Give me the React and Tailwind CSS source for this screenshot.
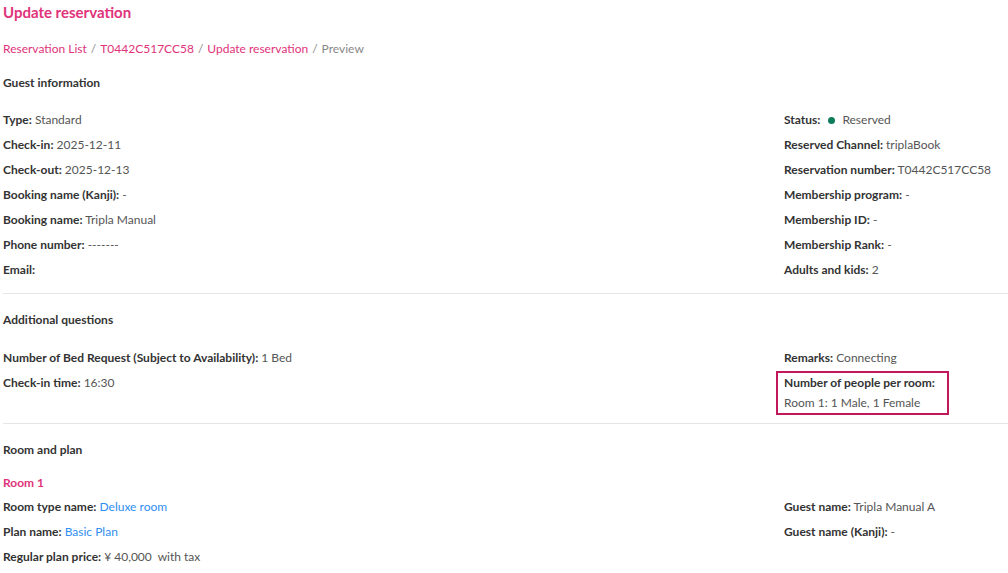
import React from "react";

const PINK = "text-[#e0337a]";

const Row = ({ label, children, valueClass = "text-[#555]" }) => (
  <div className="leading-[20px] whitespace-nowrap">
    <span className="font-bold text-[#333]">{label}:</span>{" "}
    <span className={valueClass}>{children}</span>
  </div>
);

const SectionTitle = ({ children, className = "" }) => (
  <div className={`font-bold text-[#333] leading-[20px] ${className}`}>{children}</div>
);

const Divider = ({ className = "" }) => (
  <div className={`h-px bg-[#e6e6e6] ${className}`} />
);

const App = () => {
  return (
    <div
      className="w-[1008px] h-[573px] overflow-hidden bg-white text-[12px] pl-[3px]"
      style={{ fontFamily: "Lato, 'Noto Sans', sans-serif" }}
    >
      {/* Header */}
      <div className={`pt-[2px] text-[15px] font-bold leading-[20px] ${PINK}`}>
        Update reservation
      </div>
      <div className="mt-[17px] leading-[20px] text-[#888]">
        <span className={PINK}>Reservation List</span>
        <span className="mx-[4px]">/</span>
        <span className={PINK}>T0442C517CC58</span>
        <span className="mx-[4px]">/</span>
        <span className={PINK}>Update reservation</span>
        <span className="mx-[4px]">/</span>
        <span>Preview</span>
      </div>

      {/* Guest information */}
      <SectionTitle className="mt-[14px]">Guest information</SectionTitle>
      <div className="mt-[17px] grid grid-cols-[781px_1fr]">
        <div className="flex flex-col gap-[5px]">
          <Row label="Type">Standard</Row>
          <Row label="Check-in">2025-12-11</Row>
          <Row label="Check-out">2025-12-13</Row>
          <Row label="Booking name (Kanji)">-</Row>
          <Row label="Booking name">Tripla Manual</Row>
          <Row label="Phone number">-------</Row>
          <Row label="Email"></Row>
        </div>
        <div className="flex flex-col gap-[5px]">
          <div className="leading-[20px] flex items-center">
            <span className="font-bold text-[#333]">Status:</span>
            <span className="ml-[8px] w-[7px] h-[7px] rounded-full bg-[#0f7d5c]" />
            <span className="ml-[7px] text-[#555]">Reserved</span>
          </div>
          <Row label="Reserved Channel">triplaBook</Row>
          <Row label="Reservation number">T0442C517CC58</Row>
          <Row label="Membership program">-</Row>
          <Row label="Membership ID">-</Row>
          <Row label="Membership Rank">-</Row>
          <Row label="Adults and kids">2</Row>
        </div>
      </div>

      <Divider className="mt-[13px]" />

      {/* Additional questions */}
      <SectionTitle className="mt-[16px]">Additional questions</SectionTitle>
      <div className="mt-[18px] grid grid-cols-[781px_1fr]">
        <div className="flex flex-col gap-[5px]">
          <Row label="Number of Bed Request (Subject to Availability)">1 Bed</Row>
          <Row label="Check-in time">16:30</Row>
        </div>
        <div className="flex flex-col gap-[3px]">
          <Row label="Remarks">Connecting</Row>
          <div className="-ml-[8px] w-[173px] border-2 border-[#c2185b] pl-[6px] leading-[20px]">
            <div className="font-bold text-[#333]">Number of people per room:</div>
            <div className="text-[#555]">Room 1: 1 Male, 1 Female</div>
          </div>
        </div>
      </div>

      <Divider className="mt-[8px]" />

      {/* Room and plan */}
      <SectionTitle className="mt-[16px]">Room and plan</SectionTitle>
      <div className={`mt-[13px] font-bold leading-[20px] ${PINK}`}>Room 1</div>
      <div className="mt-[4px] grid grid-cols-[781px_1fr]">
        <div className="flex flex-col gap-[5px]">
          <Row label="Room type name" valueClass="text-[#2f8ef0]">Deluxe room</Row>
          <Row label="Plan name" valueClass="text-[#2f8ef0]">Basic Plan</Row>
          <Row label="Regular plan price">¥ 40,000&nbsp; with tax</Row>
        </div>
        <div className="flex flex-col gap-[5px]">
          <Row label="Guest name">Tripla Manual A</Row>
          <Row label="Guest name (Kanji)">-</Row>
        </div>
      </div>
    </div>
  );
};

export default App;
